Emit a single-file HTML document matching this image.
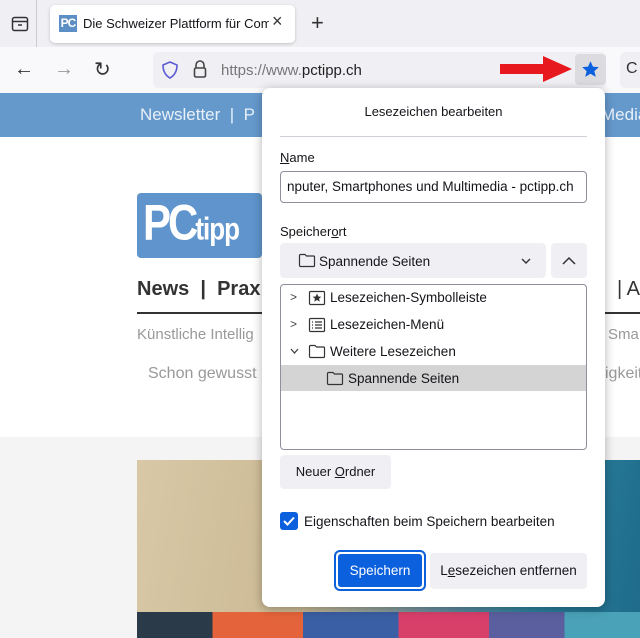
<!DOCTYPE html>
<html><head><meta charset="utf-8"><style>
*{box-sizing:border-box;margin:0;padding:0}
body{width:640px;height:638px;overflow:hidden;position:relative;font-family:"Liberation Sans",sans-serif;background:#fff;font-size:13px;color:#15141a}
.a{position:absolute}
</style></head><body>
<div class="a" style="left:0;top:0;width:640px;height:47px;background:#f0f0f4"></div>
<div class="a" style="left:36px;top:0;width:1px;height:47px;background:#ccc"></div>
<svg class="a" style="left:10px;top:14px" width="20" height="20" viewBox="0 0 20 20"><rect x="2.5" y="3.5" width="15" height="13" rx="2" fill="none" stroke="#333" stroke-width="1.5"/><line x1="3" y1="7.5" x2="17" y2="7.5" stroke="#333" stroke-width="1.5"/><line x1="8" y1="11" x2="12" y2="11" stroke="#333" stroke-width="1.5"/></svg>
<div class="a" style="left:50px;top:5px;width:245px;height:38px;background:#fff;border-radius:5px;box-shadow:0 1px 3px rgba(0,0,0,.2)"></div>
<div class="a" style="left:59px;top:15px;width:18px;height:17px;background:#5b8fc6;color:#fff;font-weight:bold;font-size:12px;line-height:17px;text-align:center;letter-spacing:-1px">PC</div>
<div class="a" style="left:83px;top:16px;font-size:13px;white-space:nowrap;width:186px;overflow:hidden">Die Schweizer Plattform für Com</div>
<div class="a" style="left:272px;top:11px;font-size:18px;color:#333">×</div>
<div class="a" style="left:311px;top:10px;font-size:22px;color:#333">+</div>
<div class="a" style="left:0;top:47px;width:640px;height:46px;background:#f9f9fb"></div>
<div class="a" style="left:14px;top:58px;font-size:20px;color:#333">←</div>
<div class="a" style="left:54px;top:58px;font-size:20px;color:#999">→</div>
<div class="a" style="left:94px;top:57px;font-size:20px;color:#333">↻</div>
<div class="a" style="left:153px;top:52px;width:453px;height:36px;background:#f0f0f4;border-radius:5px"></div>
<svg class="a" style="left:160px;top:60px" width="20" height="20" viewBox="0 0 20 20"><path d="M10 2 L17 5 Q17 14 10 18 Q3 14 3 5 Z" fill="none" stroke="#5b5bd6" stroke-width="1.6"/></svg>
<svg class="a" style="left:192px;top:59px" width="16" height="20" viewBox="0 0 16 20"><path d="M4 9 V6 a4 4 0 0 1 8 0 V9" fill="none" stroke="#444" stroke-width="1.6"/><rect x="2.5" y="9" width="11" height="9" rx="1.5" fill="none" stroke="#444" stroke-width="1.6"/></svg>
<div class="a" style="left:221px;top:62px;font-size:15px;color:#777">https://www.<span style="color:#222">pctipp.ch</span></div>
<svg class="a" style="left:498px;top:54px" width="75" height="30" viewBox="0 0 75 30"><path d="M2 10 H45 V2 L74 15 L45 28 V20 H2 Z" fill="#e8191e"/></svg>
<div class="a" style="left:575px;top:54px;width:31px;height:31px;background:#dcdce0;border-radius:4px"></div>
<svg class="a" style="left:580px;top:59px" width="21" height="21" viewBox="0 0 24 24"><path d="M12 2.5 L14.8 8.7 L21.5 9.3 L16.4 13.8 L18 20.4 L12 16.9 L6 20.4 L7.6 13.8 L2.5 9.3 L9.2 8.7 Z" fill="#0a60dd"/></svg>
<div class="a" style="left:620px;top:52px;width:30px;height:36px;background:#f0f0f4;border-radius:5px;font-size:16px;padding:8px 6px;color:#333">C</div>
<div class="a" style="left:0;top:93px;width:640px;height:44px;background:#6599cc"></div>
<div class="a" style="left:140px;top:105px;color:#e8f0f8;font-size:17px">Newsletter &nbsp;| &nbsp;P</div>
<div class="a" style="left:601px;top:105px;color:#e8f0f8;font-size:17px">Media</div>
<div class="a" style="left:137px;top:193px;width:125px;height:65px;background:#5f95cc;border-radius:4px;overflow:hidden"><div style="color:#fff;font-weight:bold;font-size:42px;line-height:60px;padding-left:6px;letter-spacing:-3px;transform:scaleY(1.2);transform-origin:0 50%;white-space:nowrap">PC<span style="font-size:26px;letter-spacing:-1px">tipp</span></div></div>
<div class="a" style="left:137px;top:278px;font-size:20px;font-weight:bold;color:#333">News &nbsp;| &nbsp;Prax</div>
<div class="a" style="left:137px;top:312px;width:125px;height:2px;background:#333"></div>
<div class="a" style="left:605px;top:312px;width:35px;height:2px;background:#333"></div>
<div class="a" style="left:617px;top:278px;font-size:20px;color:#333">| A</div>
<div class="a" style="left:137px;top:326px;font-size:15px;color:#999">Künstliche Intellig</div>
<div class="a" style="left:148px;top:365px;font-size:16px;color:#999">Schon gewusst</div>
<div class="a" style="left:608px;top:326px;font-size:15px;color:#999">Sma</div>
<div class="a" style="left:605px;top:365px;font-size:16px;color:#999">igkeit</div>
<div class="a" style="left:0;top:437px;width:640px;height:201px;background:#f4f4f4"></div>
<div class="a" style="left:137px;top:460px;width:503px;height:178px;background:linear-gradient(100deg,#d8c8a6 0%,#cbb993 35%,#6a8fa0 60%,#2a7f9c 80%,#1e6a8a 100%)"></div>
<div class="a" style="left:137px;top:612px;width:503px;height:26px;background:linear-gradient(90deg,#2a3a48 0 15%,#e5633a 15% 33%,#3b5fa4 33% 52%,#d8406a 52% 70%,#5b5f9f 70% 85%,#4aa2b8 85%)"></div>
<div class="a" style="left:262px;top:88px;width:343px;height:519px;background:#fff;border-radius:8px;box-shadow:0 2px 10px rgba(0,0,0,.3)"></div>
<div class="a" style="left:262px;top:104px;width:343px;text-align:center;font-size:13px">Lesezeichen bearbeiten</div>
<div class="a" style="left:280px;top:136px;width:307px;height:1px;background:#cfcfd8"></div>
<div class="a" style="left:280px;top:150px;font-size:13px"><u>N</u>ame</div>
<div class="a" style="left:280px;top:171px;width:307px;height:32px;border:1px solid #8f8f9d;border-radius:4px;font-size:13.5px;padding:7px 6px;white-space:nowrap;overflow:hidden">nputer, Smartphones und Multimedia - pctipp.ch</div>
<div class="a" style="left:280px;top:224px;font-size:13px">Speicher<u>o</u>rt</div>
<div class="a" style="left:280px;top:243px;width:266px;height:35px;background:#f0f0f4;border-radius:4px"></div>
<svg class="a" style="left:298px;top:253px" width="18" height="15" viewBox="0 0 18 15"><path d="M1.5 2.5 a1 1 0 0 1 1-1 H7 L8.5 3 H15.5 a1 1 0 0 1 1 1 V12.5 a1 1 0 0 1-1 1 H2.5 a1 1 0 0 1-1-1 Z" fill="none" stroke="#333" stroke-width="1.2"/></svg>
<div class="a" style="left:319px;top:254px;font-size:13.5px">Spannende Seiten</div>
<svg class="a" style="left:520px;top:256px" width="12" height="10" viewBox="0 0 12 10"><path d="M2 3 L6 7 L10 3" fill="none" stroke="#333" stroke-width="1.4"/></svg>
<div class="a" style="left:551px;top:243px;width:36px;height:35px;background:#f0f0f4;border-radius:4px"></div>
<svg class="a" style="left:561px;top:255px" width="16" height="12" viewBox="0 0 16 12"><path d="M2 9 L8 3 L14 9" fill="none" stroke="#333" stroke-width="1.5"/></svg>
<div class="a" style="left:280px;top:284px;width:307px;height:166px;border:1px solid #8f8f9d;border-radius:4px"></div>
<div class="a" style="left:281px;top:365px;width:305px;height:26px;background:#d4d4d4"></div>
<div class="a" style="left:290px;top:290px;font-size:12px;color:#444">&gt;</div>
<div class="a" style="left:290px;top:317px;font-size:12px;color:#444">&gt;</div>
<svg class="a" style="left:289px;top:347px" width="11" height="9" viewBox="0 0 11 9"><path d="M2 2 L5.5 6 L9 2" fill="none" stroke="#444" stroke-width="1.3"/></svg>
<svg class="a" style="left:308px;top:290px" width="18" height="16" viewBox="0 0 18 16"><rect x="1.5" y="1.5" width="15" height="13" rx="1" fill="none" stroke="#333" stroke-width="1.2"/><path d="M9 3.5 L10.3 6.5 L13.3 6.7 L11 8.7 L11.8 11.7 L9 10 L6.2 11.7 L7 8.7 L4.7 6.7 L7.7 6.5 Z" fill="#333"/></svg>
<svg class="a" style="left:308px;top:317px" width="18" height="16" viewBox="0 0 18 16"><rect x="1.5" y="1.5" width="15" height="13" rx="1" fill="none" stroke="#333" stroke-width="1.2"/><path d="M4 5 H5 M7 5 H14 M4 8 H5 M7 8 H14 M4 11 H5 M7 11 H14" stroke="#333" stroke-width="1.2"/></svg>
<svg class="a" style="left:308px;top:344px" width="18" height="15" viewBox="0 0 18 15"><path d="M1.5 2.5 a1 1 0 0 1 1-1 H7 L8.5 3 H15.5 a1 1 0 0 1 1 1 V12.5 a1 1 0 0 1-1 1 H2.5 a1 1 0 0 1-1-1 Z" fill="none" stroke="#333" stroke-width="1.2"/></svg>
<svg class="a" style="left:326px;top:371px" width="18" height="15" viewBox="0 0 18 15"><path d="M1.5 2.5 a1 1 0 0 1 1-1 H7 L8.5 3 H15.5 a1 1 0 0 1 1 1 V12.5 a1 1 0 0 1-1 1 H2.5 a1 1 0 0 1-1-1 Z" fill="none" stroke="#333" stroke-width="1.2"/></svg>
<div class="a" style="left:330px;top:290px;font-size:13.5px">Lesezeichen-Symbolleiste</div>
<div class="a" style="left:330px;top:317px;font-size:13.5px">Lesezeichen-Menü</div>
<div class="a" style="left:330px;top:344px;font-size:13.5px">Weitere Lesezeichen</div>
<div class="a" style="left:348px;top:371px;font-size:13.5px">Spannende Seiten</div>
<div class="a" style="left:280px;top:455px;width:111px;height:34px;background:#f0f0f4;border-radius:4px;text-align:center;line-height:34px;font-size:13px">Neuer <u>O</u>rdner</div>
<div class="a" style="left:280px;top:512px;width:18px;height:18px;background:#0a60dd;border-radius:3px"></div>
<svg class="a" style="left:280px;top:512px" width="18" height="18" viewBox="0 0 18 18"><path d="M4 9 L7.5 12.5 L14 5.5" fill="none" stroke="#fff" stroke-width="2"/></svg>
<div class="a" style="left:304px;top:514px;font-size:13.5px">Ei<u>g</u>enschaften beim Speichern bearbeiten</div>
<div class="a" style="left:334px;top:550px;width:92px;height:41px;border:2px solid #0a60dd;border-radius:6px;padding:2px"><div style="width:100%;height:100%;background:#0a60dd;border-radius:3px;color:#fff;text-align:center;line-height:33px;font-size:13.5px">Speichern</div></div>
<div class="a" style="left:430px;top:553px;width:157px;height:36px;background:#f0f0f4;border-radius:4px;text-align:center;line-height:36px;font-size:13.5px">L<u>e</u>sezeichen entfernen</div>
</body></html>
